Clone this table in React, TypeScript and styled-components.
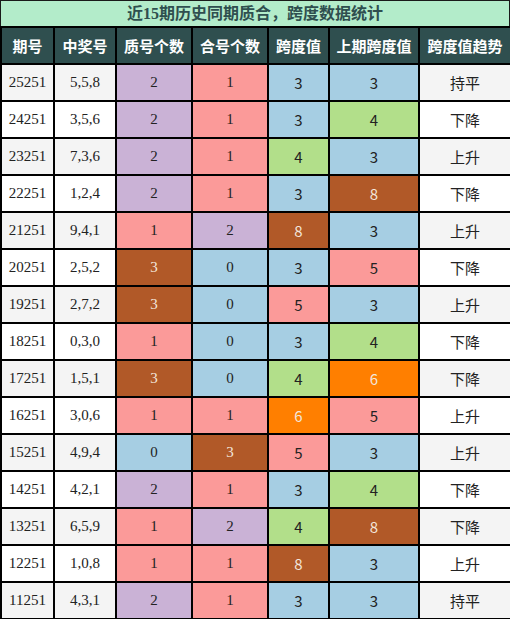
import * as React from "react";
import styled, { createGlobalStyle } from "styled-components";

const GlobalStyle = createGlobalStyle`
	html, body {
		margin: 0;
		padding: 0;
		background: #ffffff;
	}
`;

const Page = styled.div`
	width: 510px;
	font-family: "Liberation Serif", "Noto Sans CJK SC", serif;
`;

const Title = styled.div`
	height: 25px;
	line-height: 25px;
	background: #b3ecca;
	border: 1px solid #1a1a1a;
	border-bottom: none;
	color: #2f4f4f;
	font-size: 16px;
	font-weight: bold;
	text-align: center;
	font-family: "Liberation Serif", "Noto Sans CJK SC", serif;
`;

const Table = styled.table`
	width: 510px;
	border-collapse: collapse;
	table-layout: fixed;
	border: 2px solid #000;
`;

const HeadCell = styled.th`
	height: 35px;
	padding: 0;
	background: #2f4f4f;
	color: #ffffff;
	font-size: 15px;
	font-weight: bold;
	font-family: "Noto Sans CJK SC", sans-serif;
	border: 2px solid #000;
	text-align: center;
`;

const Cell = styled.td<{ $bg?: string; $dark?: boolean; $sans?: boolean }>`
	height: 35px;
	padding: 0;
	text-align: center;
	font-size: 15px;
	border: 2px solid #000;
	background: ${(p) => p.$bg || "transparent"};
	color: ${(p) => (p.$dark ? "#f3e6dc" : "#222")};
	font-family: ${(p) =>
		p.$sans ? `"Noto Sans CJK SC", sans-serif` : `"Liberation Serif", "Noto Sans CJK SC", serif`};
`;

const Row = styled.tr<{ $shade: boolean }>`
	background: ${(p) => (p.$shade ? "#f4f4f4" : "#ffffff")};
`;

const BLUE = "#a6cee3";
const PINK = "#fb9a99";
const PURPLE = "#cab2d6";
const GREEN = "#b2df8a";
const BROWN = "#b15928";
const ORANGE = "#ff7f00";

const countColor: Record<number, string> = { 0: BLUE, 1: PINK, 2: PURPLE, 3: BROWN };
const spanColor: Record<number, string> = { 3: BLUE, 4: GREEN, 5: PINK, 6: ORANGE, 8: BROWN };

const rows: [string, string, number, number, number, number, string][] = [
	["25251", "5,5,8", 2, 1, 3, 3, "持平"],
	["24251", "3,5,6", 2, 1, 3, 4, "下降"],
	["23251", "7,3,6", 2, 1, 4, 3, "上升"],
	["22251", "1,2,4", 2, 1, 3, 8, "下降"],
	["21251", "9,4,1", 1, 2, 8, 3, "上升"],
	["20251", "2,5,2", 3, 0, 3, 5, "下降"],
	["19251", "2,7,2", 3, 0, 5, 3, "上升"],
	["18251", "0,3,0", 1, 0, 3, 4, "下降"],
	["17251", "1,5,1", 3, 0, 4, 6, "下降"],
	["16251", "3,0,6", 1, 1, 6, 5, "上升"],
	["15251", "4,9,4", 0, 3, 5, 3, "上升"],
	["14251", "4,2,1", 2, 1, 3, 4, "下降"],
	["13251", "6,5,9", 1, 2, 4, 8, "下降"],
	["12251", "1,0,8", 1, 1, 8, 3, "上升"],
	["11251", "4,3,1", 2, 1, 3, 3, "持平"],
];

const isDark = (c: string) => c === BROWN || c === ORANGE;

const headers = ["期号", "中奖号", "质号个数", "合号个数", "跨度值", "上期跨度值", "跨度值趋势"];
const widths = [53, 62, 76, 76, 61, 90, 92];

export default function App() {
	return (
		<Page>
			<GlobalStyle />
			<Title>近15期历史同期质合，跨度数据统计</Title>
			<Table>
				<colgroup>
					{widths.map((w, i) => (
						<col key={i} style={{ width: w }} />
					))}
				</colgroup>
				<thead>
					<tr>
						{headers.map((h) => (
							<HeadCell key={h}>{h}</HeadCell>
						))}
					</tr>
				</thead>
				<tbody>
					{rows.map(([issue, nums, prime, comp, span, prev, trend], i) => {
						const pc = countColor[prime];
						const cc = countColor[comp];
						const sc = spanColor[span];
						const prc = spanColor[prev];
						return (
							<Row key={issue} $shade={i % 2 === 0}>
								<Cell>{issue}</Cell>
								<Cell>{nums}</Cell>
								<Cell $bg={pc} $dark={isDark(pc)}>{prime}</Cell>
								<Cell $bg={cc} $dark={isDark(cc)}>{comp}</Cell>
								<Cell $bg={sc} $dark={isDark(sc)} $sans>{span}</Cell>
								<Cell $bg={prc} $dark={isDark(prc)} $sans>{prev}</Cell>
								<Cell $sans>{trend}</Cell>
							</Row>
						);
					})}
				</tbody>
			</Table>
		</Page>
	);
}
